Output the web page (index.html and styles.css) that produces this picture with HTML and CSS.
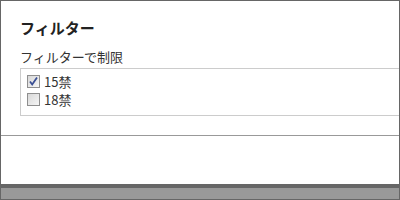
FILE: index.html
```html
<!DOCTYPE html>
<html lang="ja">
<head>
    <meta charset="UTF-8">
    <title>フィルター</title>
    <link rel="stylesheet" href="styles.css">
</head>
<body>
    <div class="frame">
        <div class="filter-panel">
            <h3>フィルター</h3>
            <div class="filter-label">フィルターで制限</div>
            <div class="filter-box">
                <label class="filter-item">
                    <span class="check-box">
                        <svg width="11" height="11" viewBox="0 0 11 11"><path d="M2 5.5 L4.2 8.5 L9 1.5" fill="none" stroke="#3a4f94" stroke-width="1.8"/></svg>
                    </span>
                    15禁
                </label>
                <label class="filter-item">
                    <span class="check-box"></span>
                    18禁
                </label>
            </div>
        </div>
        <div class="blank"></div>
    </div>
    <div class="footer-bar"></div>
</body>
</html>
```

FILE: styles.css
```css
html, body {
    margin: 0;
    padding: 0;
}
body {
    width: 400px;
    height: 200px;
    background-color: #fff;
    font-family: "Noto Sans CJK JP", sans-serif;
    color: #333;
    overflow: hidden;
}
.frame {
    height: 183px;
    border: 1px solid #666;
    border-bottom: none;
    overflow: hidden;
}
.filter-panel {
    padding: 17px 0 20px 19px;
    border-bottom: 1px solid #999;
    height: 97px;
}
h3 {
    margin: 0;
    font-size: 15px;
    line-height: 20px;
    color: #222;
}
.filter-label {
    margin-top: 10px;
    font-size: 13px;
    line-height: 18px;
}
.filter-box {
    margin-top: 2px;
    width: 420px;
    height: 40px;
    padding: 3px 0 3px 6px;
    border: 1px solid #ccc;
}
.filter-item {
    display: flex;
    align-items: center;
    gap: 4px;
    height: 18px;
    font-size: 13px;
}
.check-box {
    width: 11px;
    height: 11px;
    border: 1px solid #8f8f8f;
    background: linear-gradient(135deg, #d8d8d8, #f6f6f6);
    display: flex;
}
.footer-bar {
    height: 11px;
    background-color: #999;
    border: 1px solid #666;
    border-top-width: 4px;
}
```
